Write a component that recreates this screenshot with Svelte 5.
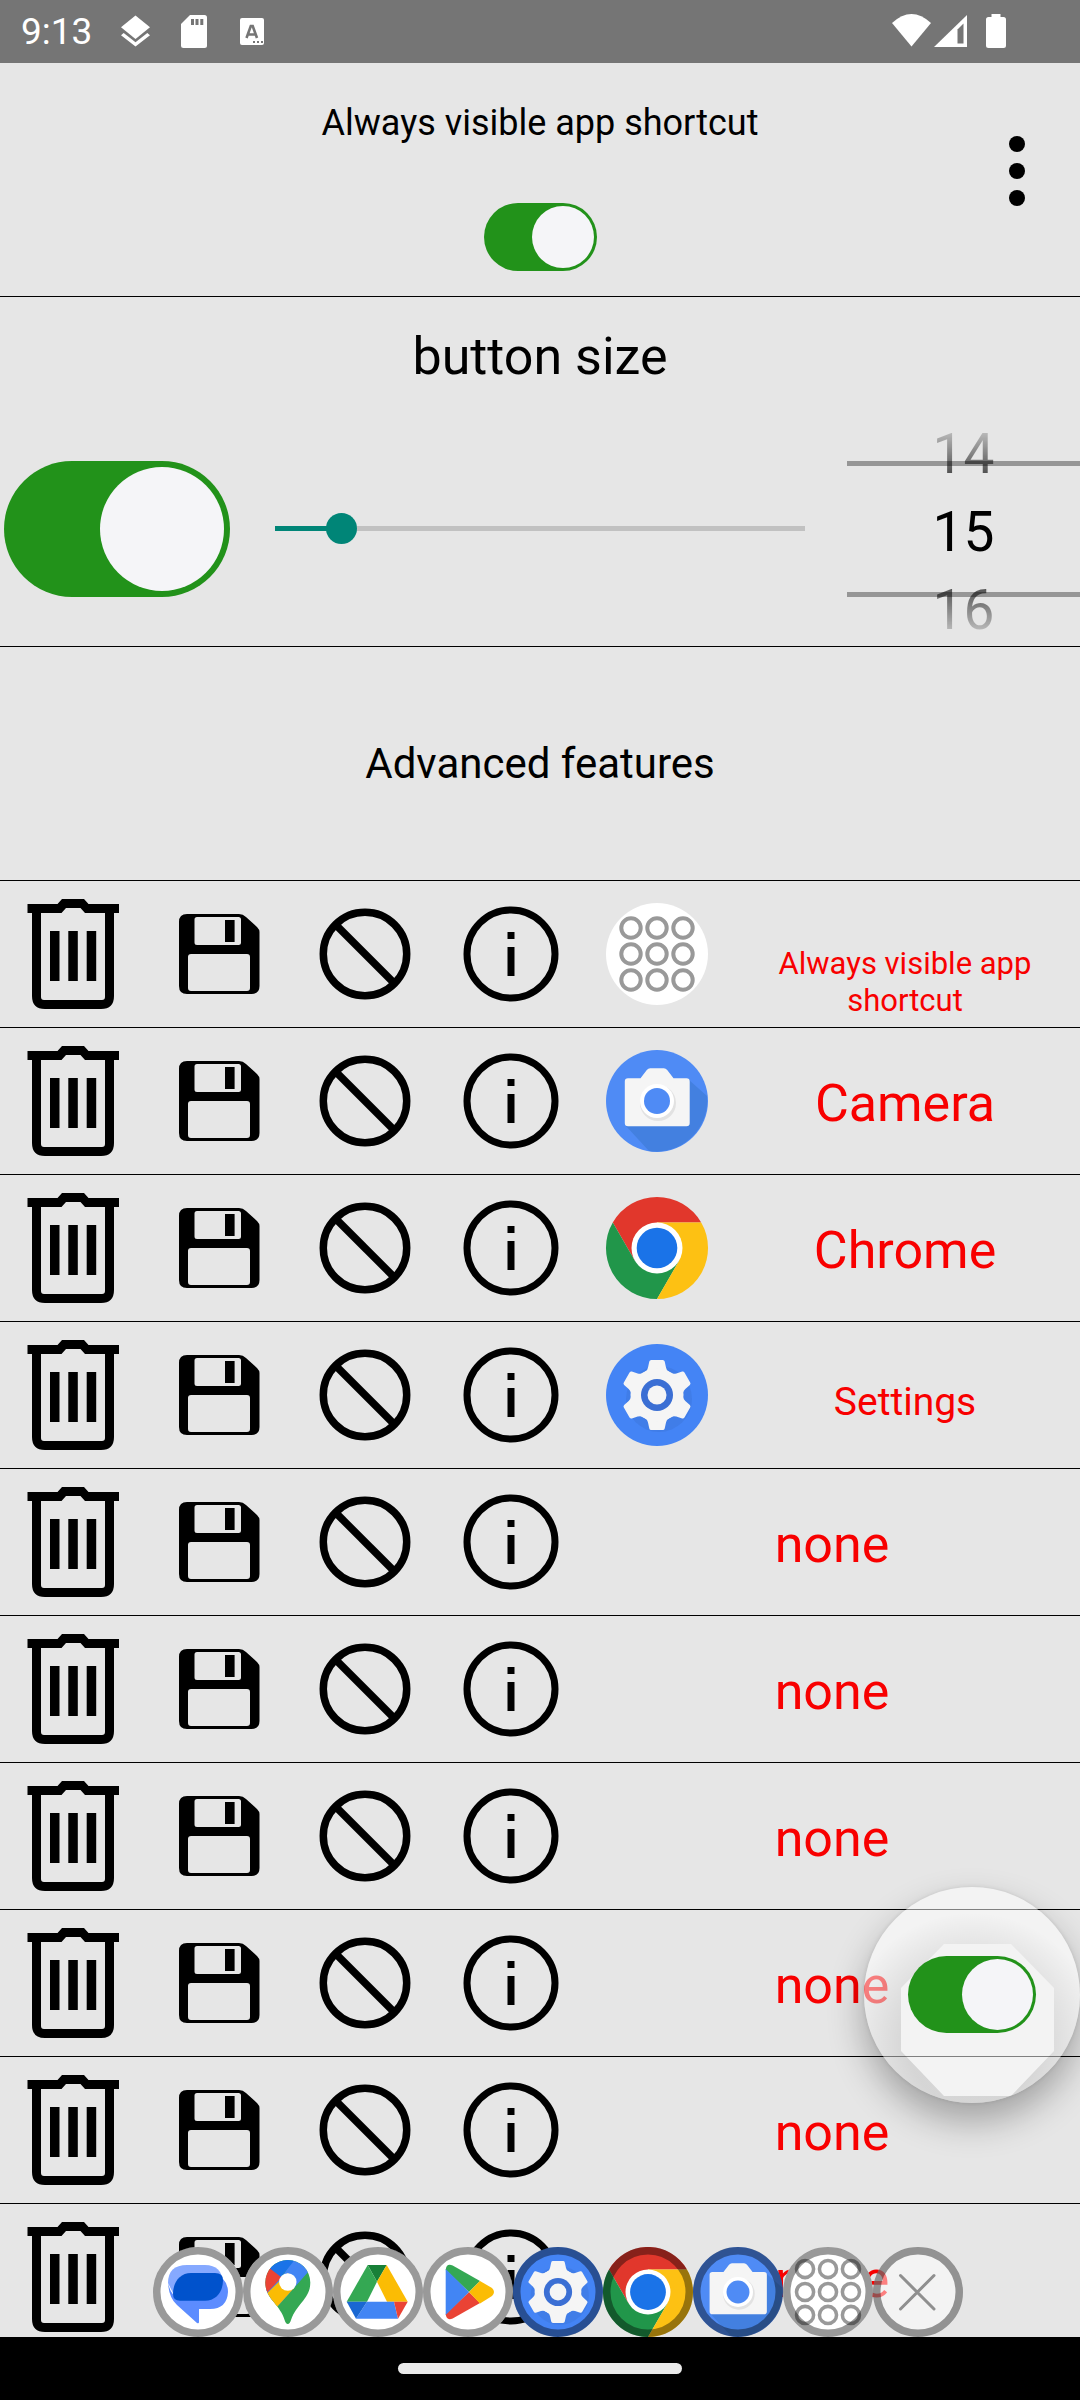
<script>
  const rows = [
    { name: 'Always visible app shortcut', icon: 'grid', size: 'small' },
    { name: 'Camera', icon: 'camera', size: 'large' },
    { name: 'Chrome', icon: 'chrome', size: 'large' },
    { name: 'Settings', icon: 'settings', size: 'medium' },
    ...Array.from({ length: 6 }, () => ({ name: 'none', icon: null, size: 'large' }))
  ];
  const dock = ['messages', 'maps', 'drive', 'play', 'settings', 'chrome', 'camera', 'grid', 'close'];
  const min = 5;
  const max = 102;
  let size = $state(15);
  let fill = $derived(((size - min) / (max - min)) * 94 + 3);
  let shown = $state(true);
  let enabled = $state(true);
  let floating = $state(true);
</script>

{#snippet appArt(name)}
  {#if name === 'grid'}
    <circle cx="51" cy="51" r="51" fill="#fff" />
    <g fill="none" stroke="#999" stroke-width="4">
      {#each [25, 51, 77] as cy}
        {#each [25, 51, 77] as cx}
          <circle {cx} {cy} r="9.7" />
        {/each}
      {/each}
    </g>
  {:else if name === 'camera'}
    <circle cx="51" cy="51" r="51" fill="#4f8bf5" />
    <path d="M83 30 101 46A51 51 0 0 1 43 101L20 76Z" fill="#4380e0" />
    <path d="M22 28.3h12.5l6.3-8.2q1.4-1.8 3.400-1.800h13.600q2 0 3.400 1.800l6.300 8.200H80.500q3.200 0 3.200 3.200v41.600q0 3.200-3.200 3.200H22q-3.200 0-3.200-3.200V31.500q0-3.200 3.200-3.200z" fill="#f5f5f5" />
    <circle cx="52" cy="53" r="18" fill="#e2e2e2" />
    <circle cx="51" cy="51" r="17" fill="#fff" />
    <circle cx="51" cy="51" r="13" fill="#4f8bf5" />
  {:else if name === 'chrome'}
    <path d="M51 25.500H95.200A51 51 0 0 0 6.800 25.500L28.900 63.750 51 51Z" fill="#e1372c" />
    <path d="M28.900 63.750 6.800 25.500A51 51 0 0 0 51 102L73.100 63.750 51 51Z" fill="#21964a" />
    <path d="M73.100 63.750 51 102A51 51 0 0 0 95.200 25.500H51V51Z" fill="#fdc113" />
    <circle cx="51" cy="51" r="25.500" fill="#fff" />
    <circle cx="51" cy="51" r="20.300" fill="#1a73e8" />
  {:else if name === 'settings'}
    <circle cx="51" cy="51" r="51" fill="#4484f5" />
    <circle cx="53" cy="55" r="33" fill="#3e78df" opacity=".6" />
    <g fill="#f5f5f5">
      {#each [0, 60, 120, 180, 240, 300] as turn}
        <path transform="rotate({turn} 51 51)" d="M43.300 17.500q.3-1.500 2-1.500h11.400q1.700 0 2 1.500l1.300 6q1 4.500 6 6L51 51 36 29.500q5-1.500 6-6z" />
      {/each}
      <circle cx="51" cy="51" r="26.500" />
    </g>
    <circle cx="51" cy="51" r="16" fill="#3b6fd4" />
    <circle cx="51" cy="51" r="9.500" fill="#f5f5f5" />
  {/if}
{/snippet}

{#snippet dockArt(name)}
  {#if name === 'messages'}
    <circle cx="45" cy="45" r="45" fill="#fff" />
    <path d="M15 36Q15 18 34 18H52Q69 18 70 36L60 50H22Z" fill="#86a9ff" />
    <path d="M70 32Q75 37 75 45 74 62 57 62H46V75q0 2-2 1L24 58Q16 51 15 36q3 14 13 17H52Z" fill="#5c8cff" />
    <path d="M38 26H62Q70 26 70 33C70 45 63 53.700 52 53.700H27Q20 53.700 20 47C20 35 27 26 38 26z" fill="#0052cc" />
  {:else if name === 'maps'}
    <circle cx="45" cy="45" r="45" fill="#fff" />
    <clipPath id="pin"><path d="M44.800 13A22.500 22.500 0 0 1 67.300 35.500C67.300 52 54 56 48 73q-1.200 4-3.200 4t-3.200-4C37 57 22.300 52 22.300 35.500A22.500 22.500 0 0 1 44.800 13z" /></clipPath>
    <g clip-path="url(#pin)">
      <path d="M0 0H90V90H0Z" fill="#34a853" />
      <path d="M52 10 74 15 35 59 20 45 38 31Z" fill="#4285f4" />
      <path d="M18 52 45 26 51 41 33 61Z" fill="#fbbc04" />
      <path d="M15 20 28 21 44 34 38 31 18 52Z" fill="#ea4335" />
      <path d="M25 20 35 10H54L38 30Z" fill="#1a73e8" />
    </g>
    <circle cx="44.800" cy="35" r="8.700" fill="#fff" />
  {:else if name === 'drive'}
    <circle cx="45" cy="45" r="45" fill="#fff" />
    <path d="M34.700 18h19L44 34.700z" fill="#188038" />
    <path d="M34.700 18 44 34.700 34 54.700H13.700z" fill="#34a853" />
    <path d="M53.700 18 74.700 54.700H54L44 34.700z" fill="#fbbc04" />
    <path d="M34 54.700H61L65 71.700H23z" fill="#4285f4" />
    <path d="M13.700 54.700H34L23 71.700z" fill="#1967d2" />
    <path d="M61 54.700H74.700L65 71.700z" fill="#ea4335" />
  {:else if name === 'play'}
    <circle cx="45" cy="45" r="45" fill="#fff" />
    <path d="M22.700 23q.5-7 7-4.500L57 34 46 45Z" fill="#34a853" />
    <path d="M22.700 67q.5 7 7 4.500L57 56 46 45Z" fill="#ea4335" />
    <path d="M57 34 69 41q4 4 0 8L57 56.500 46 45Z" fill="#fbbc04" />
    <path d="M22.700 22 46 45 22.700 68Z" fill="#4285f4" />
  {:else if name === 'close'}
    <circle cx="45" cy="45" r="45" fill="#fff" opacity=".5" />
    <path d="M27.500 28.500 61 62M61 28.500 27.500 62" stroke="#8f8f8f" stroke-width="3" stroke-linecap="round" />
  {:else}
    <svg width="90" height="90" viewBox="0 0 102 102">{@render appArt(name)}</svg>
  {/if}
  <circle cx="45" cy="45" r="41.250" fill="none" stroke="#000" stroke-opacity=".4" stroke-width="7.500" />
{/snippet}

<div class="screen">
  <div class="status">
    <span class="time">9:13</span>
    <svg class="left-icons" viewBox="0 0 150 63" aria-hidden="true">
      <g fill="#fff">
        <path d="M18.500 15.500 33 27.300 18.500 39 4 27.300Z" />
        <path d="M18.500 46.500 4 35.200l2.700-2.200 11.800 9.200L30.300 33l2.700 2.200Z" />
        <path d="M73 15h14.500q2.500 0 2.500 2.500v28q0 2.500-2.500 2.500h-21Q64 48 64 45.500V24Z" />
        <rect x="123" y="18" width="24" height="27" rx="2" />
      </g>
      <path d="M75.500 19v6M80 19v6M84.800 19v6" stroke="#757575" stroke-width="3" />
      <path d="M129.500 38 133.800 26h1.900L140 38M131.500 34.500h6.500" fill="none" stroke="#757575" stroke-width="2.600" />
      <path d="M136 42h11" stroke="#757575" stroke-width="2" stroke-dasharray="2" />
    </svg>
    <svg class="right-icons" viewBox="0 0 120 63" aria-hidden="true">
      <path d="M2 23Q21.500 5 41 23L21.500 46.500Z" fill="#fff" />
      <path d="M44 47 77 15V47Z" fill="#fff" />
      <path d="M67.500 29.500 73.500 23.500V43.500H67.500Z" fill="#757575" />
      <path d="M101.500 14h9v3h3q2.500 0 2.500 2.500v26q0 2.500-2.500 2.500h-15q-2.500 0-2.500-2.500v-26q0-2.500 2.500-2.500h3z" fill="#fff" />
    </svg>
  </div>

  <main>
    <header>
      <div class="title">
        <label for="shown">Always visible app shortcut</label>
        <input class="switch" id="shown" type="checkbox" role="switch" bind:checked={shown} />
      </div>
      <button class="menu" aria-label="Menu">
        <svg width="24" height="80" viewBox="0 0 24 80">
          <circle cx="12" cy="13" r="8" /><circle cx="12" cy="40" r="8" /><circle cx="12" cy="67" r="8" />
        </svg>
      </button>
    </header>

    <section class="sizing">
      <h2>button size</h2>
      <div class="controls">
        <input class="switch big" type="checkbox" role="switch" aria-label="Button enabled" bind:checked={enabled} />
        <input class="slider" type="range" {min} {max} aria-label="Button size" bind:value={size} style="--fill: {fill}%" />
        <div class="picker">
          <div class="wheel">
            <button onclick={() => (size -= 1)}>{size - 1}</button>
            <input type="text" aria-label="Size value" bind:value={size} />
            <button onclick={() => (size += 1)}>{size + 1}</button>
          </div>
        </div>
      </div>
    </section>

    <button class="advanced">Advanced features</button>

    <ul>
      {#each rows as row}
        <li class:bare={!row.icon}>
          <button aria-label="Delete">
            <svg viewBox="0 0 146 146">
              <path fill-rule="evenodd" d="M27.500 23H57.500L62 18H84L88.500 23H119V32H114V115Q114 128 101 128H45Q32 128 32 115V32H27.500ZM41 32V116Q41 119 44 119H102Q105 119 105 116V32H85L80.500 27H66L61.500 32Z" />
              <path d="M50 50h9.500v50H50zM68.300 50h9.500v50h-9.500zM86.700 50h9.500v50h-9.500z" />
            </svg>
          </button>
          <button aria-label="Save">
            <svg viewBox="0 0 146 146">
              <path fill-rule="evenodd" d="M41 33H93Q97 33 100 36L111 46Q113.500 48.500 113.500 51V105Q113.500 113 105.500 113H41Q33 113 33 105V41Q33 33 41 33ZM51 36Q48.500 36 48.500 38.500V61.500Q48.500 64 51 64H92.500Q95 64 95 61.500V38.500Q95 36 92.500 36ZM45 73Q42 73 42 76V107Q42 110 45 110H101Q104 110 104 107V76Q104 73 101 73Z" />
              <path d="M79 39h9.600v22H79z" />
            </svg>
          </button>
          <button aria-label="Disable">
            <svg viewBox="0 0 146 146">
              <g fill="none" stroke="#000" stroke-width="7.500"><circle cx="73" cy="73" r="41.700" /><path d="M43.500 43.500 102.500 102.500" /></g>
            </svg>
          </button>
          <button aria-label="Info">
            <svg viewBox="0 0 146 146">
              <circle cx="73" cy="73" r="44" fill="none" stroke="#000" stroke-width="7" />
              <path d="M69.500 51h7v7h-7zM69.500 66h7v29h-7z" />
            </svg>
          </button>
          {#if row.icon}
            <button aria-label="Open {row.name}">
              <svg viewBox="-22 -22 146 146">{@render appArt(row.icon)}</svg>
            </button>
          {/if}
          <div class="label {row.size}"><span>{row.name}</span></div>
        </li>
      {/each}
    </ul>

    <div class="bubble">
      <input class="switch mid" type="checkbox" role="switch" aria-label="Floating shortcut" bind:checked={floating} />
    </div>

    <div class="dock">
      {#each dock as name}
        <button aria-label={name}>
          <svg width="90" height="90" viewBox="0 0 90 90">{@render dockArt(name)}</svg>
        </button>
      {/each}
    </div>
  </main>

  <nav><button aria-label="Home"></button></nav>
</div>

<style>
  :global(body) {
    margin: 0;
    background: #e6e6e6;
  }
  .screen {
    display: flex;
    flex-direction: column;
    height: 100vh;
    font-family: Roboto, sans-serif;
    color: #000;
  }
  button,
  input {
    margin: 0;
    padding: 0;
    border: 0;
    background: none;
    font: inherit;
    color: inherit;
  }
  svg {
    display: block;
  }
  .status {
    display: flex;
    align-items: center;
    height: 63px;
    flex: none;
    background: #757575;
    color: #fff;
  }
  .time {
    width: 96px;
    padding-left: 21px;
    font-size: 37px;
    line-height: 66px;
  }
  .left-icons {
    width: 150px;
    height: 63px;
  }
  .right-icons {
    width: 120px;
    height: 63px;
    margin-left: auto;
    margin-right: 70px;
  }
  main {
    position: relative;
    flex: 1;
    min-height: 0;
    overflow: hidden;
    background: #e6e6e6;
  }
  header {
    display: grid;
    grid-template-columns: 126px 1fr 126px;
    height: 233px;
    border-bottom: 1px solid #000;
  }
  .title {
    grid-column: 2;
    display: flex;
    flex-direction: column;
    align-items: center;
    gap: 50px;
    padding-top: 30px;
    font-size: 36px;
    line-height: 60px;
  }
  .menu {
    display: grid;
    place-items: center;
    height: 216px;
  }
  .switch {
    appearance: none;
    box-sizing: border-box;
    display: flex;
    flex: none;
    width: 113px;
    height: 68px;
    padding: 3px;
    border-radius: 68px;
    background: #22921a;
  }
  .switch:checked {
    justify-content: flex-end;
  }
  .switch::before {
    content: '';
    height: 100%;
    aspect-ratio: 1;
    border-radius: 50%;
    background: #f5f5f8;
  }
  .big {
    width: 226px;
    height: 136px;
    padding: 6px;
    margin: 0 4px;
  }
  .mid {
    width: 128px;
    height: 77px;
  }
  .sizing {
    height: 349px;
    border-bottom: 1px solid #000;
  }
  h2 {
    height: 118px;
    margin: 0;
    text-align: center;
    font-size: 52px;
    font-weight: 400;
    line-height: 120px;
  }
  .controls {
    display: flex;
    align-items: center;
    height: 227px;
  }
  .slider {
    appearance: none;
    flex: 1;
    min-width: 0;
    height: 31px;
    margin: 0 42px 0 41px;
    background: linear-gradient(to right, #008577 var(--fill), #c1c1c1 var(--fill)) center / 100% 5px no-repeat;
  }
  .slider::-webkit-slider-thumb {
    appearance: none;
    width: 31px;
    height: 31px;
    border-radius: 50%;
    background: #008577;
  }
  .picker {
    align-self: flex-start;
    width: 233px;
    height: 231px;
    overflow: hidden;
    background:
      linear-gradient(#969696, #969696) 0 46px / 100% 5px no-repeat,
      linear-gradient(#969696, #969696) 0 177px / 100% 5px no-repeat;
  }
  .wheel {
    display: grid;
    grid-template-rows: repeat(3, 78px);
    font-size: 55px;
    line-height: 78px;
    text-align: center;
    mask-image: linear-gradient(transparent, #000 90px, #000 138px, transparent);
  }
  .wheel input {
    width: 100%;
    text-align: center;
  }
  .advanced {
    display: block;
    width: 100%;
    height: 234px;
    border-bottom: 1px solid #000;
    font-size: 42px;
  }
  ul {
    margin: 0;
    padding: 0;
    list-style: none;
  }
  li {
    display: grid;
    grid-template-columns: repeat(5, 146px) 1fr;
    height: 146px;
    border-bottom: 1px solid #000;
  }
  li.bare {
    grid-template-columns: repeat(4, 146px) 1fr;
  }
  .label {
    display: flex;
    align-items: baseline;
    justify-content: center;
    padding: 0 24px;
    color: #f80000;
    text-align: center;
  }
  .label::before {
    content: '';
    height: 93px;
  }
  .small {
    font-size: 31px;
    line-height: 37px;
  }
  .medium {
    font-size: 39px;
  }
  .large {
    font-size: 52px;
  }
  .bubble {
    position: absolute;
    right: 0;
    bottom: 234px;
    box-sizing: border-box;
    width: 216px;
    height: 216px;
    padding: 69px 0 0 44px;
    border-radius: 50%;
    background: rgba(255, 255, 255, 0.5);
    box-shadow: 0 18px 36px rgba(0, 0, 0, 0.3), 0 0 4px rgba(0, 0, 0, 0.1);
  }
  .bubble::before {
    content: '';
    position: absolute;
    inset: 0;
    border-radius: 50%;
    background: radial-gradient(circle 130px at 50% 72%, rgba(0, 0, 0, 0.12) 50%, transparent);
    clip-path: polygon(evenodd, 0 0, 216px 0, 216px 216px, 0 216px, 0 0, 80px 57px, 147px 57px, 190px 101px, 190px 164px, 147px 209px, 80px 209px, 37px 164px, 37px 101px, 80px 57px);
  }
  .bubble .switch {
    position: relative;
  }
  .dock {
    position: absolute;
    right: 117px;
    bottom: 0;
    display: flex;
  }
  nav {
    display: grid;
    place-items: center;
    flex: none;
    height: 63px;
    background: #000;
  }
  nav button {
    width: 284px;
    height: 11px;
    border-radius: 6px;
    background: #eaeaea;
  }
</style>
